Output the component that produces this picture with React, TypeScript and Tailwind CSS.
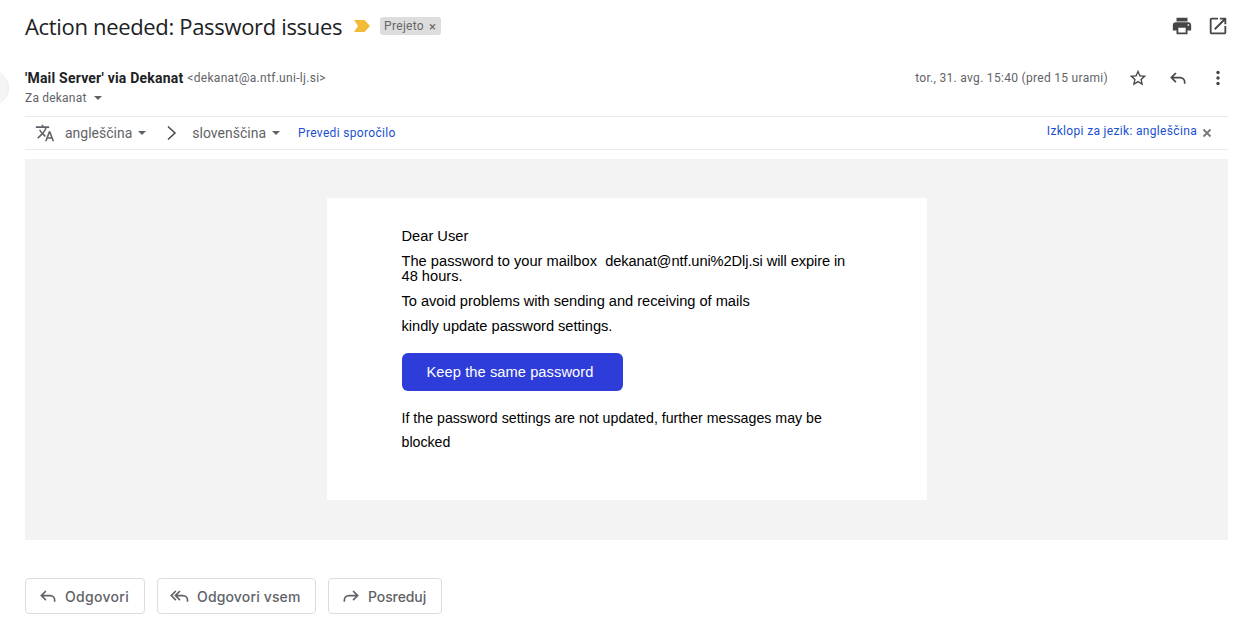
const Ic = ({ d, size = 24, className = "" }: { d: string; size?: number; className?: string }) => (
  <svg width={size} height={size} viewBox="0 0 24 24" fill="currentColor" className={className}><path d={d} /></svg>
);
const Reply = ({ size = 20, flip = false }: { size?: number; flip?: boolean }) => (
  <svg width={size} height={size} viewBox="0 0 24 24" fill="none" stroke="currentColor" strokeWidth="2" style={flip ? { transform: "scaleX(-1)" } : undefined}>
    <path d="M9.5 6 4 11.5 9.5 17M4 11.5h10.5c3 0 5.5 2.500 5.500 5.500v2" />
  </svg>
);
const ReplyAll = () => (
  <svg width={20} height={20} viewBox="0 0 24 24" fill="none" stroke="currentColor" strokeWidth="2">
    <path d="M7 6 1.500 11.500 7 17M12 6 6.500 11.500 12 17M6.500 11.500H15.500c3 0 5.500 2.500 5.500 5.500v2" />
  </svg>
);
const Caret = () => <span className="inline-block w-0 h-0 border-x-[4px] border-x-transparent border-t-[4px] border-t-[#5f6368]" />;
const Btn = ({ icon, label, w, tracking }: { icon: React.ReactNode; label: string; w: string; tracking: string }) => (
  <div className={`${w} h-[36px] flex items-center pl-[12px] gap-[7px] rounded-[4px] border border-[#dadce0] text-[#5f6368] text-[14px] font-medium`} style={{ fontFamily: "Inter, sans-serif" }}>
    <span className="text-[#5f6368] flex">{icon}</span>
    <span className={tracking}>{label}</span>
  </div>
);

export default function App() {
  return (
    <div className="relative w-[1242px] h-[627px] overflow-hidden bg-white pl-[25px] pr-[14px]" style={{ fontFamily: "Roboto, sans-serif" }}>
      <div className="absolute left-[-30px] top-[70px] w-[39px] h-[36px] rounded-full bg-[#f5f5f5] border border-[#eeeeee]" />
      {/* title */}
      <div className="h-[54px] flex items-center pb-[2px]">
        <h1 className="text-[22px] text-[#202124] leading-[28px] tracking-[-0.33px]" style={{ fontFamily: '"Open Sans", sans-serif' }}>Action needed: Password issues</h1>
        <svg width="16" height="12" viewBox="0 0 16 12" className="ml-[12px]"><path d="M0 0h10.500L16 6l-5.500 6H0l4-6z" fill="#f2bc36" /></svg>
        <span className="ml-[10px] h-[18px] pl-[4px] pr-[5px] flex items-center gap-[5px] rounded-[3px] bg-[#dddddd] text-[#666666] text-[12px] tracking-[0.3px]">Prejeto <span className="text-[13px] leading-none">×</span></span>
        <div className="ml-auto -mr-[1px] flex items-center gap-[14px] text-[#444746]">
          <Ic size={22} d="M19 8H5c-1.660 0-3 1.340-3 3v6h4v4h12v-4h4v-6c0-1.660-1.340-3-3-3zm-3 11H8v-5h8v5zm3-7c-.55 0-1-.45-1-1s.45-1 1-1 1 .45 1 1-.45 1-1 1zm-1-9H6v4h12V3z" />
          <Ic size={22} d="M19 19H5V5h7V3H5c-1.110 0-2 .9-2 2v14c0 1.100.89 2 2 2h14c1.100 0 2-.9 2-2v-7h-2v7zM14 3v2h3.590l-9.830 9.830 1.410 1.410L19 6.410V10h2V3h-7z" />
        </div>
      </div>
      {/* sender */}
      <div className="h-[62px] pt-[15px]">
        <div className="flex items-center h-[18px]">
          <b className="text-[14px] font-bold text-[#202124] tracking-[0.2px]">'Mail Server' via Dekanat</b>
          <span className="ml-[4px] text-[12px] text-[#5f6368] tracking-[0.3px]">&lt;dekanat@a.ntf.uni-lj.si&gt;</span>
          <span className="ml-auto text-[12px] text-[#5f6368] tracking-[0.3px]">tor., 31. avg. 15:40 (pred 15 urami)</span>
          <div className="ml-[20px] flex items-center gap-[20px] text-[#444746]">
            <Ic size={20} d="M22 9.240l-7.190-.62L12 2 9.190 8.630 2 9.240l5.460 4.730L5.820 21 12 17.270 18.180 21l-1.630-7.030L22 9.240zM12 15.400l-3.760 2.270 1-4.280-3.320-2.880 4.380-.38L12 6.100l1.710 4.040 4.380.38-3.320 2.880 1 4.280L12 15.400z" />
            <Reply />
            <svg width="20" height="20" viewBox="0 0 20 20" fill="currentColor"><circle cx="10" cy="4.500" r="1.700" /><circle cx="10" cy="10" r="1.700" /><circle cx="10" cy="15.500" r="1.700" /></svg>
          </div>
        </div>
        <div className="flex items-center gap-[7px] h-[16px] mt-[3px] text-[12px] text-[#5f6368] tracking-[0.2px]">Za dekanat <Caret /></div>
      </div>
      {/* translate bar */}
      <div className="h-[34px] border-y border-[#e8eaed] flex items-center pl-[10px] text-[14px] text-[#5f6368]">
        <Ic size={20} d="M12.870 15.070l-2.540-2.510.03-.03c1.740-1.940 2.980-4.170 3.710-6.530H17V4h-7V2H8v2H1v1.990h11.170C11.500 7.920 10.400 9.750 9 11.350 8.090 10.340 7.330 9.230 6.690 8h-2c.73 1.630 1.730 3.170 2.980 4.560l-5.090 5.020L4 19l5-5 3.110 3.110.76-2.040zM18.500 10h-2L12 22h2l1.120-3h4.750L21 22h2l-4.500-12zm-2.620 7l1.620-4.330L19.120 17h-3.240z" />
        <span className="ml-[10px]">angleščina</span>
        <span className="ml-[6px] flex"><Caret /></span>
        <svg width="12" height="16" viewBox="0 0 12 16" fill="none" stroke="#444746" strokeWidth="1.500" className="ml-[20px]"><path d="M2 1.500 9 8l-7 6.500" /></svg>
        <span className="ml-[14px]">slovenščina</span>
        <span className="ml-[6px] flex"><Caret /></span>
        <span className="ml-[18px] text-[12px] tracking-[0.33px] text-[#1a4fcf]">Prevedi sporočilo</span>
        <span className="ml-auto text-[12px] tracking-[0.33px] text-[#1a4fcf] mb-[4px]">Izklopi za jezik: angleščina</span>
        <span className="ml-[5px] mr-[16px] w-[10px]"><svg width="10" height="10" viewBox="0 0 10 10" stroke="#777777" strokeWidth="1.800"><path d="M1.500 1.500l7 7M8.500 1.500l-7 7" /></svg></span>
      </div>
      {/* body */}
      <div className="mt-[9px] h-[381px] bg-[#f3f3f3] pt-[39px] flex justify-center">
        <div className="w-[600px] h-[302px] bg-white pl-[75px] pt-[30px] text-black text-[14.67px]" style={{ fontFamily: '"Liberation Sans", sans-serif' }}>
          <p className="leading-[17px]">Dear User</p>
          <p className="leading-[15px] mt-[9px] w-[450px]">The password to your mailbox&nbsp; <span className="tracking-[-0.1px]">dekanat@ntf.uni%2Dlj.si will expire in</span> 48 hours.</p>
          <p className="leading-[17px] mt-[9px] tracking-[-0.04px]">To avoid problems with sending and receiving of mails</p>
          <p className="leading-[17px] mt-[8px] tracking-[-0.03px]">kindly update password settings.</p>
          <div className="mt-[18px] w-[221px] h-[38px] rounded-[6px] bg-[#2e3cda] text-white flex items-center pl-[25px] tracking-[0.07px]">Keep the same password</div>
          <p className="mt-[15px] w-[450px] leading-[24px] text-[14.2px]">If the password settings are not updated, further messages may be blocked</p>
        </div>
      </div>
      {/* actions */}
      <div className="mt-[38px] flex gap-[12px]">
        <Btn w="w-[120px]" icon={<Reply />} label="Odgovori" tracking="tracking-[0.3px]" />
        <Btn w="w-[159px]" icon={<ReplyAll />} label="Odgovori vsem" tracking="tracking-[0.15px]" />
        <Btn w="w-[114px]" icon={<Reply flip />} label="Posreduj" tracking="tracking-[-0.1px]" />
      </div>
    </div>
  );
}
